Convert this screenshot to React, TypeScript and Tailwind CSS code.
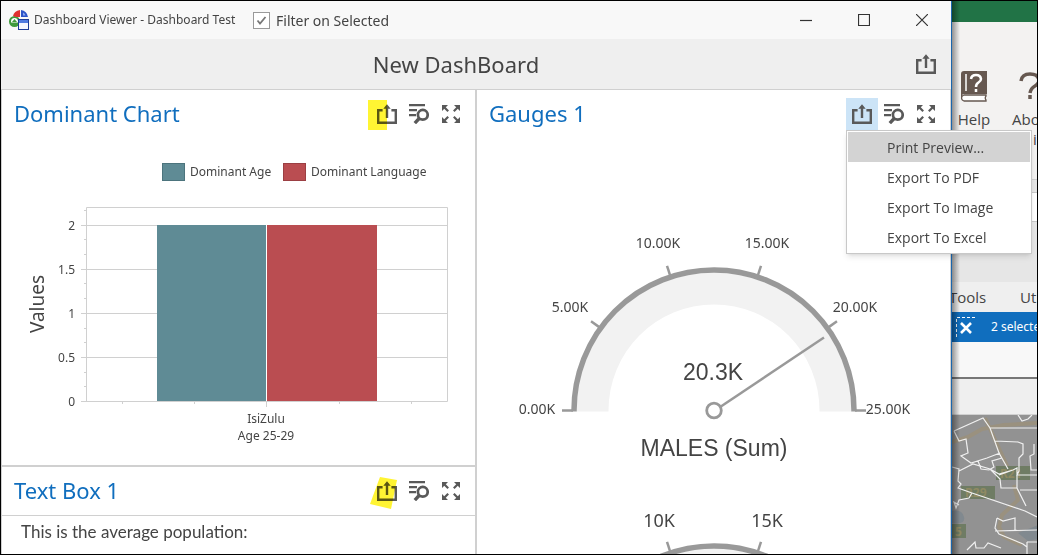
import type { ReactNode } from "react";

const ui = "font-['Noto_Sans',sans-serif]";
const seg = "font-['Open_Sans',sans-serif]";

function ExportIcon() {
  return (
    <svg width="20" height="20" viewBox="0 0 20 20" fill="none" stroke="#595959" strokeWidth="2.4" aria-hidden="true">
      <path d="M5.600 6.200H1.200v12.600h17.600V6.200h-4.400M10 14V2" />
      <path d="M6.300 4.800 10 .3l3.700 4.500z" fill="#595959" stroke="none" />
    </svg>
  );
}

function FilterIcon() {
  return (
    <svg width="20" height="20" viewBox="0 0 20 20" fill="none" stroke="#595959" strokeWidth="2.2" aria-hidden="true">
      <path d="M0 1.200h16M0 6.200h8M0 11.200h7" />
      <circle cx="13.8" cy="10.8" r="4.900" strokeWidth="2.700" />
      <path d="m10.400 14.300-4.600 4.800" strokeWidth="3.400" />
    </svg>
  );
}

function ExpandIcon() {
  return (
    <svg width="18" height="18" viewBox="0 0 18 18" fill="#595959" stroke="#595959" aria-hidden="true">
      <path d="M0 0h6L0 6zM18 0v6l-6-6zM0 18v-6l6 6zM18 18h-6l6-6z" stroke="none" />
      <path d="m2 2 4.200 4.200M16 2l-4.200 4.200M2 16l4.200-4.200M16 16l-4.200-4.200" strokeWidth="2.200" />
    </svg>
  );
}

function ToolButton({ label, active, children }: { label: string; active?: boolean; children: ReactNode }) {
  return (
    <button aria-label={label} className={`flex size-8 items-center justify-center ${active ? "bg-[#cce4f7]" : ""}`}>
      {children}
    </button>
  );
}

function ExportMenu() {
  const items = ["Print Preview...", "Export To PDF", "Export To Image", "Export To Excel"];
  return (
    <div role="menu" className="absolute top-full left-0 z-20 w-[186px] border border-[#c8c8c8] bg-white p-px shadow-md">
      {items.map((item, i) => (
        <button
          key={item}
          role="menuitem"
          className={`block h-[30px] w-full pl-[39px] text-left text-[14px] whitespace-nowrap text-[#444] ${seg} ${i === 0 ? "bg-[#d3d3d3]" : ""}`}
        >
          {item}
        </button>
      ))}
    </div>
  );
}

function PanelHeader({ title, menu, mark }: { title: string; menu?: boolean; mark?: ReactNode }) {
  return (
    <div className="flex h-12 shrink-0 items-center justify-between pr-2 pl-3">
      <h2 className={`pb-0.5 text-[22px] text-[#106ebe] ${ui}`}>{title}</h2>
      <div className="flex">
        <div className="relative">
          <ToolButton label="Export" active={menu}>
            <ExportIcon />
          </ToolButton>
          {mark}
          {menu && <ExportMenu />}
        </div>
        <ToolButton label="Filter">
          <FilterIcon />
        </ToolButton>
        <ToolButton label="Maximize">
          <ExpandIcon />
        </ToolButton>
      </div>
    </div>
  );
}

function BarChart() {
  const rows: [string, number][] = [["2", 87.5], ["1.5", 131.5], ["1", 175.5], ["0.5", 219.5], ["0", 263.5]];
  const minor = [72.5, 101.5, 116.5, 145.5, 160.5, 190.5, 204.5, 234.5, 248.5];
  return (
    <svg className={`block w-full ${ui}`} viewBox="0 0 473 327" fontSize="13" fill="#444" role="img" aria-label="Dominant Chart">
      <g strokeWidth="1">
        <rect x="160.5" y="25.5" width="22" height="17" fill="#5f8b95" stroke="#4c747d" />
        <rect x="281.5" y="25.5" width="22" height="17" fill="#ba4d51" stroke="#9b3f43" />
      </g>
      <text x="188" y="38" fontSize="12">Dominant Age</text>
      <text x="309" y="38" fontSize="12">Dominant Language</text>
      <g stroke="#d0d0d0" fill="none">
        <path d="M84.5 69.5h361v194h-361z" />
        {rows.map(([t, y]) => <path key={t} d={`M79 ${y}h366`} />)}
        {minor.map((y) => <path key={y} d={`M82 ${y}h2`} />)}
        {[120.5, 192.5, 337.5, 409.5].map((x) => <path key={x} d={`M${x} 264v2`} />)}
      </g>
      <rect x="155" y="87" width="109" height="176" fill="#5f8b95" />
      <rect x="265" y="87" width="110" height="176" fill="#ba4d51" />
      <path d="M264.5 87v176" stroke="#fff" />
      <path d="M264.5 264v5" stroke="#d0d0d0" />
      {rows.map(([t, y]) => <text key={t} x="73" y={y + 4} fontSize="12" textAnchor="end">{t}</text>)}
      <text x="264" y="285" fontSize="12" textAnchor="middle">IsiZulu</text>
      <text x="264" y="302" fontSize="12" textAnchor="middle">Age 25-29</text>
      <text transform="translate(42 166) rotate(-90)" fontSize="19" textAnchor="middle">Values</text>
    </svg>
  );
}

function Dial({ cy }: { cy: number }) {
  const ticks = [0, 36, 72, 108, 144, 180];
  return (
    <g>
      <path d={`M131.5 ${cy + 1}V${cy}a105.5 106 0 0 1 211 0v1h32v-1a137.500 138 0 0 0-275 0v1z`} fill="#f2f2f2" />
      <path d={`M97 ${cy + 1}V${cy}a140 140.500 0 0 1 280 0v1`} fill="none" stroke="#999" strokeWidth="5.500" />
      {ticks.map((a) => (
        <path key={a} d="M-152 0h11" transform={`translate(237 ${cy}) rotate(${a})`} stroke="#999" strokeWidth="2.500" />
      ))}
    </g>
  );
}

function Gauges() {
  const labels: [string, number, number][] = [
    ["0.00K", 60, 276],
    ["5.00K", 93, 174],
    ["10.00K", 181, 110],
    ["15.00K", 290, 110],
    ["20.00K", 378, 174],
    ["25.00K", 411, 276],
  ];
  return (
    <svg className={`block w-full shrink-0 ${ui}`} viewBox="0 0 473 416" fill="#444" textAnchor="middle" role="img" aria-label="Gauges">
      <Dial cy={272.5} />
      <path d="m243.500 268.700 103.500-69.200" stroke="#999" strokeWidth="2.500" />
      <circle cx="237" cy="272.5" r="7.300" fill="#fff" stroke="#999" strokeWidth="2.800" />
      {labels.map(([t, x, y]) => <text key={t} x={x} y={y} fontSize="14">{t}</text>)}
      <g className="font-['Liberation_Sans',sans-serif]" fontSize="23">
        <text x="236" y="242">20.3K</text>
        <text x="237" y="318">MALES (Sum)</text>
      </g>
      <Dial cy={548.5} />
      <text x="182" y="389" fontSize="18">10K</text>
      <text x="290" y="389" fontSize="18">15K</text>
    </svg>
  );
}

function AppLogo() {
  return (
    <svg width="20" height="20" viewBox="0 0 20 20" aria-hidden="true">
      <circle cx="5.500" cy="11.500" r="5.500" fill="#3f9a3c" />
      <path d="M2 11.500a3.500 3.500 0 0 1 7 0v1H2z" fill="#fff" />
      <path d="m3 12 2.500-3L8 12z" fill="#3f9a3c" />
      <path d="M4 6q1-5 7-6v7H7z" fill="#e03030" />
      <path d="M12 0q6 1 7 7h-7z" fill="#2d55c8" />
      <path d="M14 2.500q2 1 2.500 3H14z" fill="#8fa9ef" />
      <rect x="9.500" y="9.500" width="10" height="10" fill="#f4f7ff" stroke="#1d3c96" />
      <path d="M10 10h9v3h-9z" fill="#4f7be0" />
    </svg>
  );
}

function TitleBar() {
  return (
    <header className="flex h-[38px] shrink-0 items-center bg-[#f8f8f8] pl-2 text-[#444]">
      <AppLogo />
      <div className="flex items-center gap-3">
        <span className={`ml-[5px] text-[12px] ${ui} min-w-[207px]`}>Dashboard Viewer - Dashboard Test</span>
        <label className={`flex items-center gap-1.5 text-[14px] ${ui}`}>
          <span className="relative flex size-[17px]">
            <input type="checkbox" defaultChecked className="peer size-[17px] appearance-none border border-[#999] bg-white" />
            <svg className="pointer-events-none absolute inset-0 hidden peer-checked:block" width="17" height="17" viewBox="0 0 17 17" fill="none" stroke="#777" strokeWidth="1.800" aria-hidden="true">
              <path d="m4.500 8.500 2.500 3 5.500-6.500" />
            </svg>
          </span>
          Filter on Selected
        </label>
      </div>
      <div className="ml-auto flex h-full">
        {[
          ["Minimize", "M0 6.500h12"],
          ["Restore", "M.5.5h11v11H.5z"],
          ["Close", "m0 0 12 12M12 0 0 12"],
        ].map(([name, d]) => (
          <button key={name} aria-label={name} className="flex w-[58px] items-center justify-center">
            <svg width="12" height="12" viewBox="0 0 12 12" fill="none" stroke="#333" strokeWidth="1.200">
              <path d={d} />
            </svg>
          </button>
        ))}
      </div>
    </header>
  );
}

function MapView() {
  return (
    <svg className="block min-h-0 flex-1" width="85" height="139" viewBox="0 0 85 139" preserveAspectRatio="xMinYMin slice" aria-hidden="true">
      <rect width="85" height="139" fill="#929292" />
      <g fill="none" stroke="#9a917f" strokeWidth="4" strokeLinejoin="round">
        <path d="M0 27 16 22 30 14 52 10 85 8M33 3 56 53 62 62M62 70 66 85 50 100 47 112 52 122 70 130" />
      </g>
      <path d="M0 96q10-2 12 6T0 108zM66 118l20-8v14l-10 2z" fill="#81898f" />
      <g fill="#6f7c64">
        <rect x="44" y="51" width="34" height="14" />
        <rect x="9" y="71" width="34" height="13" />
        <rect x="0" y="109" width="14" height="14" />
      </g>
      <g className={ui} fill="#8f8a63" fontSize="12" fontWeight="700">
        <text x="48" y="63">R21</text>
        <text x="13" y="82">R29</text>
        <text x="3" y="121">5</text>
      </g>
      <path
        d="M2 16 31 3 38 13 47 38 56 54M2 16 7 26 14 24 16 38 9 41 19 48 35 43 48 38M38 13h47M43 26 66 27 71 29 71 39 67 43 67 56 65 60H85M82 29v10l-4 2 1 14h6M26 46 29 54 37 55 42 52 40 46 50 43M0 52l7 2-1 12 3 3-3 4 14 5 53 18 12 6M7 56l14-7 17 5 9 5 14-4 4-2v20l9 18M38 54l10 10 1 9h16M47 60l14-5M68 75h17M20 78l-3 5-10 2-3 8-2-6 5 3M66 0l4 6 6-2 4-4M45 103l-2 10 4 6 24 10 4 3M45 103l6 3 12-3v12M43 116l42-1M75 127h10M75 127v12M15 135l8-8 1 6 8 0 4-5 13 5"
        fill="none"
        stroke="#f0f0f0"
        strokeWidth="1.200"
      />
    </svg>
  );
}

function BackgroundApp() {
  return (
    <aside className={`relative flex w-[86px] shrink-0 flex-col overflow-hidden border-l border-[#1a66ad] bg-[#f3f2f1] text-[#444] ${seg}`}>
      <div className="h-[21px] shrink-0 bg-[#217346]" />
      <div className="flex h-[158px] shrink-0 gap-5 border-b border-[#d0d0d0] pt-[49px] pl-1.5 text-[15px]">
        <div className="flex w-8 shrink-0 flex-col items-center">
          <svg width="26" height="31" viewBox="0 0 26 31" aria-hidden="true">
            <path d="M3 0h23v23H3q-2 0-2 2v1H0V3q0-3 3-3z" fill="#665850" />
            <path d="M3 24h22v1q-1.500 2 0 4v1H3q-2.500-1-2.500-3T3 24z" fill="#fff" stroke="#665850" strokeWidth="1.300" />
            <path d="M5 3v17" stroke="#fff" strokeWidth="1.500" />
            <path d="M10 8q.5-4 5-4t5 4q0 2-2.500 3.500T15 16M15 18v3" fill="none" stroke="#fff" strokeWidth="2.500" />
          </svg>
          <span className="mt-[7px] leading-5">Help</span>
        </div>
        <div className="flex w-8 shrink-0 flex-col pl-0.5">
          <svg className="ml-1.5" width="24" height="31" viewBox="0 0 24 31" fill="none" stroke="#665850" strokeWidth="3.500" aria-hidden="true">
            <path d="M3 10q1-7 9-7t9 6q0 4-4 6t-5 7M12 24v4" />
          </svg>
          <span className="mt-[7px] leading-5">About</span>
          <span className="pl-[21px] leading-5">is</span>
        </div>
      </div>
      <div className="h-3 shrink-0 bg-[#e6e6e6]" />
      <div className="h-[30px] shrink-0 border-y border-[#c8c8c8] bg-white" />
      <div className="h-[60px] shrink-0 bg-[#e6e6e6]" />
      <div className="flex h-[30px] shrink-0 items-center bg-[#efefef] text-[15px] whitespace-nowrap">
        <span className="-ml-[3px] w-[71px] shrink-0">Tools</span>
        <span>Utilities</span>
      </div>
      <div className={`flex h-[30px] shrink-0 items-center bg-[#106ebe] pl-1 text-[12px] whitespace-nowrap text-white ${ui}`}>
        <svg className="mr-[15px] shrink-0" width="20" height="20" viewBox="0 0 20 20" fill="none" stroke="#fff" aria-hidden="true">
          <path d="M.5 20V.5H20" strokeDasharray="3 2" />
          <path d="m5 6 10 10M15 6 5 16" strokeWidth="2.600" />
        </svg>
        2 selected
      </div>
      <div className="h-[37px] shrink-0 border-b-2 border-[#777] bg-[#f8f8f8]" />
      <div className="h-9 shrink-0 border-b border-[#d0d0d0] bg-[#efefef]" />
      <MapView />
      <div className="pointer-events-none absolute inset-y-0 left-0 w-2 bg-linear-to-r from-black/40 to-transparent" />
    </aside>
  );
}

export default function App() {
  return (
    <div className="flex h-screen overflow-hidden border border-black">
      <main className="relative z-10 flex min-w-0 flex-1 flex-col bg-white">
        <TitleBar />
        <div className="relative flex h-[51px] shrink-0 items-center justify-center border-b border-[#d0d0d0] bg-[#efefef] pr-10">
          <h1 className={`text-[22px] text-[#444] ${ui}`}>New DashBoard</h1>
          <div className="absolute right-[9px]">
            <ToolButton label="Export dashboard">
              <ExportIcon />
            </ToolButton>
          </div>
        </div>
        <div className="grid min-h-0 flex-1 grid-cols-[475fr_473fr] border-x border-[#d0d0d0]">
          <section className="flex min-h-0 flex-col border-r-2 border-[#d0d0d0]">
            <div className="border-b-2 border-[#d0d0d0]">
              <PanelHeader
                title="Dominant Chart"
                mark={<span className="absolute top-0.5 -left-[3px] h-[30px] w-[19px] bg-[#fff200]/80 mix-blend-multiply" />}
              />
              <BarChart />
            </div>
            <PanelHeader
              title="Text Box 1"
              mark={
                <svg className="absolute top-0.5 -left-px mix-blend-multiply" width="27" height="32" viewBox="0 0 27 32" aria-hidden="true">
                  <path d="M10 0 27 3 21 32 0 27z" fill="#fff433" />
                </svg>
              }
            />
            <p className="border-t border-[#d0d0d0] px-[19px] pt-1 font-['Lato',sans-serif] text-[17px] leading-6 text-[#444]">
              This is the average population:
            </p>
          </section>
          <section className="flex min-h-0 min-w-0 flex-col">
            <PanelHeader title="Gauges 1" menu />
            <div className="min-h-0 flex-1 overflow-hidden">
              <Gauges />
            </div>
          </section>
        </div>
      </main>
      <BackgroundApp />
    </div>
  );
}
